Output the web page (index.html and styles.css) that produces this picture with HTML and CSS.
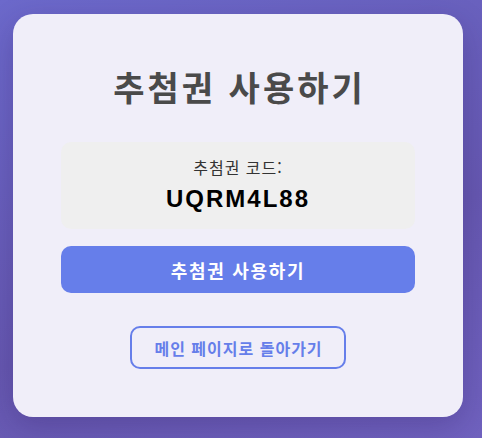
FILE: index.html
```html
<!DOCTYPE html>
<html lang="ko">
<head>
<meta charset="utf-8">
<title>추첨권 사용하기</title>
<link rel="stylesheet" href="styles.css">
</head>
<body>
<main class="card">
  <h1 class="title">추첨권 사용하기</h1>
  <section class="code-box">
    <div class="code-label">추첨권 코드:</div>
    <div class="code-value">UQRM4L88</div>
  </section>
  <button class="btn-primary" type="button">추첨권 사용하기</button>
  <div class="back-row">
    <a class="btn-outline" href="#">메인 페이지로 돌아가기</a>
  </div>
</main>
</body>
</html>
```
FILE: styles.css
```css
html, body {
  margin: 0;
  height: 100%;
}
body {
  background: linear-gradient(160deg, #6c69cb 0%, #6658b0 60%, #7062bf 100%);
  font-family: "Noto Sans CJK KR", "Liberation Sans", sans-serif;
  padding: 14px 19px 0 13px;
  box-sizing: border-box;
}
.card {
  width: 450px;
  box-sizing: border-box;
  background: #f0eef9;
  border-radius: 20px;
  padding: 48px;
  box-shadow: 0 10px 30px rgba(40, 20, 90, 0.25);
  display: flex;
  flex-direction: column;
  text-align: center;
}
.title {
  margin: 0 0 30px;
  font-size: 34px;
  line-height: 50px;
  font-weight: 700;
  letter-spacing: 3px;
  text-indent: 3px;
  color: #4a4a4a;
}
.code-box {
  background: #efefef;
  border-radius: 10px;
  padding: 15px;
  display: flex;
  flex-direction: column;
  gap: 7px;
}
.code-label {
  font-size: 16px;
  line-height: 20px;
  letter-spacing: 1px;
  color: #333;
}
.code-value {
  font-family: "Liberation Sans", "Noto Sans CJK KR", sans-serif;
  font-size: 24px;
  line-height: 30px;
  font-weight: 700;
  letter-spacing: 2px;
  color: #000;
}
.btn-primary {
  margin-top: 17px;
  height: 47px;
  border: none;
  border-radius: 10px;
  background: #667eea;
  color: #fff;
  font-family: "Noto Sans CJK KR", "Liberation Sans", sans-serif;
  font-size: 18px;
  font-weight: 700;
  letter-spacing: 1.7px;
  cursor: pointer;
}
.back-row {
  margin-top: 33px;
  display: flex;
  justify-content: center;
}
.btn-outline {
  height: 43px;
  box-sizing: border-box;
  display: flex;
  align-items: center;
  padding: 0 21px 0 22px;
  border: 2px solid #667eea;
  border-radius: 10px;
  color: #667eea;
  font-size: 16px;
  font-weight: 700;
  letter-spacing: 1px;
  text-decoration: none;
}
```
